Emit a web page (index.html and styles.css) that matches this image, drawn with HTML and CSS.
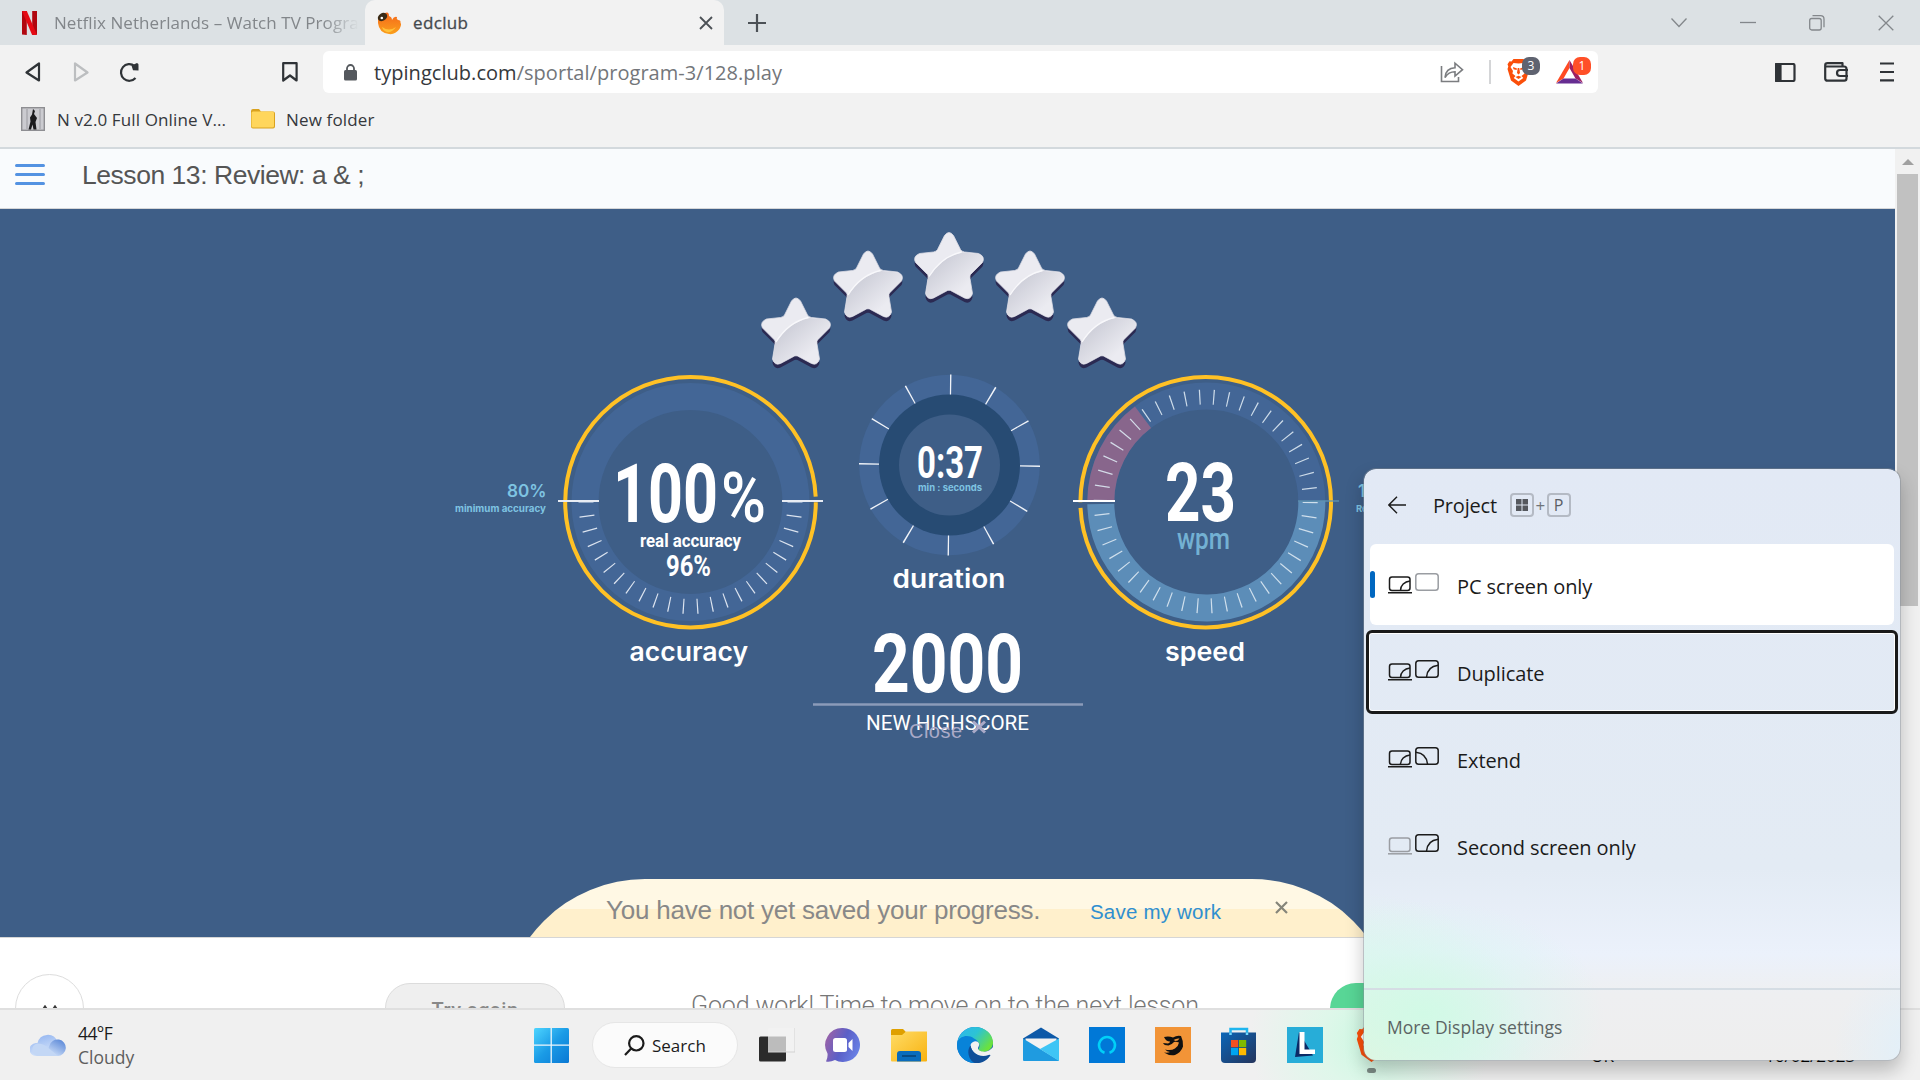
FILE: index.html
```html
<!DOCTYPE html>
<html lang="en">
<head>
<meta charset="utf-8">
<title>edclub</title>
<link rel="stylesheet" href="styles.css">
</head>
<body>
<svg class="defs" width="0" height="0">
  <defs>
    <linearGradient id="starLow" x1="0.2" y1="0.3" x2="0.7" y2="0.75"><stop offset="0" stop-color="#cfd0da"/><stop offset="1" stop-color="#ebebf1"/></linearGradient>
    <linearGradient id="winBlue" x1="0" y1="0" x2="1" y2="1"><stop offset="0" stop-color="#4ed5ff"/><stop offset="0.5" stop-color="#1a9be6"/><stop offset="1" stop-color="#0a78d4"/></linearGradient>
    <linearGradient id="chat" x1="0" y1="0.3" x2="1" y2="0.7"><stop offset="0" stop-color="#9a62a8"/><stop offset="0.5" stop-color="#5b5fc7"/><stop offset="1" stop-color="#6a84e8"/></linearGradient>
    <linearGradient id="folder" x1="0" y1="0" x2="1" y2="1"><stop offset="0" stop-color="#ffdc66"/><stop offset="1" stop-color="#f8b210"/></linearGradient>
    <linearGradient id="edgeTop" x1="0" y1="0" x2="1" y2="0.6"><stop offset="0" stop-color="#2db5f0"/><stop offset="0.5" stop-color="#2cc3d4"/><stop offset="1" stop-color="#6be23c"/></linearGradient>
    <linearGradient id="edgeLow" x1="0" y1="0" x2="1" y2="1"><stop offset="0" stop-color="#1484d8"/><stop offset="1" stop-color="#0b4f9e"/></linearGradient>
    <linearGradient id="cloud" x1="0" y1="0" x2="0.4" y2="1"><stop offset="0" stop-color="#8cb0ef"/><stop offset="1" stop-color="#d5e4fa"/></linearGradient>
    <linearGradient id="cloudDark" x1="1" y1="0" x2="0.3" y2="1"><stop offset="0" stop-color="#4f7fd4"/><stop offset="1" stop-color="#d3e3fa"/></linearGradient>
    <linearGradient id="flame" x1="0" y1="0" x2="0" y2="1"><stop offset="0" stop-color="#f4661b"/><stop offset="1" stop-color="#fba01c"/></linearGradient>
    <linearGradient id="store" x1="0" y1="0" x2="1" y2="1"><stop offset="0" stop-color="#0a66b8"/><stop offset="1" stop-color="#25345c"/></linearGradient>
    <symbol id="star" viewBox="0 0 70 72" overflow="visible">
      <path transform="translate(0 4)" fill="#2b2a52" d="M30 3Q34.500 -3 39 3L46 17Q47 19 50 19.500L64 21Q71 24 68 30L56 42Q55 43 55.500 46L58 61Q56 68 50 65.500L36 58Q34.500 57.500 33 58L19 65.500Q13 68 11 61L13.500 46Q14 43 13 42L1 30Q-2 24 5 21L19 19.500Q22 19 23 17Z"/>
      <path fill="#ebebf1" stroke="#dcdce5" stroke-width=".8" d="M30 3Q34.500 -3 39 3L46 17Q47 19 50 19.500L64 21Q71 24 68 30L56 42Q55 43 55.500 46L58 61Q56 68 50 65.500L36 58Q34.500 57.500 33 58L19 65.500Q13 68 11 61L13.500 46Q14 43 13 42L1 30Q-2 24 5 21L19 19.500Q22 19 23 17Z"/>
      <path fill="url(#starLow)" d="M13.500 46Q27 24 48 20L64 21.500Q70 24 67 30L56 41Q55 43 55 46L57 61Q55 67 50 65L36 57.500Q34.500 57 33 57.500L19 65Q13 67 11.500 61Z"/>
      <path fill="none" stroke="#f8f8fb" stroke-width="1.300" d="M14.500 44Q27 24 47 19.500"/>
    </symbol>
    <symbol id="lion" viewBox="0 0 22 27">
      <path fill="#fb4f0a" d="M6 0h10l2 2.500 2-.2 2 3-.8 2.200.8 2.500-3.500 11.500L11 27l-7.500-5.500L0 10l.8-2.500L0 5.300l2-3 2 .2z"/>
      <path fill="#fff" d="M11 4.500l5-.5 3 4-2.500 4 .6 2.500L14 17l1.800 2-4.800 3.500L6.200 19 8 17l-3.100-2.500.6-2.500L3 8l3-4z"/>
      <path fill="#fb4f0a" d="M5.500 8l4 1.500L9 11l-3-.8zM16.500 8l-4 1.500.5 1.500 3-.8zM10.200 9h1.600l.7 5-1.500 1.400L9.500 14zM8 18l3-1.200L14 18l-3 2z"/>
    </symbol>
    <symbol id="laptop" viewBox="0 0 24 18"><rect x="1.500" y="1" width="20.500" height="13.500" rx="2.500"/><path d="M0 16.800h24"/></symbol>
    <symbol id="laptopOn" viewBox="0 0 24 18"><rect x="1.500" y="1" width="20.500" height="13.500" rx="2.500"/><path d="M0 16.800h24M12.500 14.500c0-5 4-9 9.500-9.500"/></symbol>
    <symbol id="screen" viewBox="0 0 24 18"><rect x=".8" y=".8" width="22.400" height="16.400" rx="2.800"/></symbol>
    <symbol id="screenDup" viewBox="0 0 24 18"><rect x=".8" y=".8" width="22.400" height="16.400" rx="2.800"/><path d="M11.500 17.200C12 10.500 16 6 23.200 5.200"/></symbol>
    <symbol id="screenExt" viewBox="0 0 24 18"><rect x=".8" y=".8" width="22.400" height="16.400" rx="2.800"/><path d="M.8 5.200C8 6 12 10.500 12.500 17.200"/></symbol>
  </defs>
</svg>

<div class="screen">
  <header class="tabs">
    <div class="tab idle">
      <svg width="15" height="24" viewBox="0 0 15 24"><path fill="#b1060f" d="M0 0h4.800v24L0 23.500zM10.200 0H15v23.500l-4.800.5z"/><path fill="#e50914" d="M0 0h4.800L15 24l-5-.3z"/></svg>
      <span class="tab-title fade">Netflix Netherlands – Watch TV Progra</span>
    </div>
    <div class="tab active">
      <svg width="25" height="24" viewBox="0 0 25 24"><path fill="url(#flame)" d="M12 5Q15 6 15 9Q17 5 20 6Q19 8 21 9Q24 9 23.500 12Q25 13 22.500 18Q18 24 12 23Q2 22 1 12Q0 3 8 2Q12 0 12 5Z"/><ellipse cx="5.500" cy="6" rx="5" ry="3.800" fill="#3a2a16" transform="rotate(-35 5.500 6)"/><circle cx="4.800" cy="7" r="1.300" fill="#fff"/><path fill="#ffc23b" d="M5 16q7 5 14 0q-4 6-9 5q-4-1-5-5z"/></svg>
      <span class="tab-title strong">edclub</span>
      <svg class="tab-x" width="14" height="14" viewBox="0 0 14 14"><path d="M1 1l12 12M13 1L1 13" stroke="#4c5156" stroke-width="1.800"/></svg>
    </div>
    <svg class="tab-plus" width="18" height="18" viewBox="0 0 18 18"><path d="M9 0v18M0 9h18" stroke="#4c5156" stroke-width="2.200"/></svg>
    <div class="win-controls">
      <svg width="16" height="16" viewBox="0 0 16 16"><path d="M.5 3.500l7.500 8 7.500-8"/></svg>
      <svg width="16" height="16" viewBox="0 0 16 16"><path d="M0 7.500h16"/></svg>
      <svg width="16" height="16" viewBox="0 0 16 16"><rect x=".7" y="3.500" width="11.500" height="11.500" rx="2"/><path d="M3.500.7h8q3.500 0 3.500 3.500v8"/></svg>
      <svg width="16" height="16" viewBox="0 0 16 16"><path d="M.7.7l14.600 14.600M15.300.7L.7 15.300"/></svg>
    </div>
  </header>

  <div class="toolbar">
    <svg class="t-back" width="16" height="21" viewBox="0 0 16 21"><path d="M14 1.500v17L1.500 10.500z"/></svg>
    <svg class="t-fwd" width="16" height="21" viewBox="0 0 16 21"><path d="M2 1.500v17L14.500 10.500z"/></svg>
    <svg class="t-reload" width="21" height="21" viewBox="0 0 21 21"><path d="M16.500 16A8.300 8.300 0 1 1 15.500 4"/><path fill="#2f3337" stroke="none" d="M12.500 3.500L18 1q2 .5 1.500 3v4.500l-5.500-.3z"/></svg>
    <svg class="t-mark" width="16" height="20" viewBox="0 0 16 20"><path d="M1.200 1.200h13.400v17.300L8 13.500l-6.800 5z"/></svg>
    <div class="omnibox">
      <svg class="lock" width="13" height="17" viewBox="0 0 13 17"><rect y="6" width="13" height="10.500" rx="1.500" fill="#54585d"/><path d="M3 7V4.500a3.500 3.500 0 0 1 7 0V7" fill="none" stroke="#54585d" stroke-width="1.800"/></svg>
      <span class="url"><b>typingclub.com</b>/sportal/program-3/128.play</span>
      <svg class="share" width="24" height="22" viewBox="0 0 24 22"><path d="M1.500 5v15.500h17V16" /><path d="M5 16.500c.5-6 4-9.500 10-9.700V2.200l7.500 6.500L15 15v-4.200c-4.500 0-7.500 1.500-10 5.700z"/></svg>
      <i class="sep"></i>
      <span class="ext"><svg width="23" height="27"><use href="#lion"/></svg><em class="badge gray">3</em></span>
      <span class="ext"><svg width="27" height="24" viewBox="0 0 27 24"><path fill="#ff4a22" d="M13.500 0L0 23l7.500-4.500 6-10.500z"/><path fill="#9e1f63" d="M13.500 0L27 23l-7.500-4.500-6-10.500z"/><path fill="#662d91" d="M0 23.500h27l-7.500-5h-12z"/></svg><em class="badge orange">1</em></span>
    </div>
    <svg class="t-side" width="21" height="19" viewBox="0 0 21 19"><rect x="1" y="1" width="18.500" height="17" rx="1.500"/><path fill="#2f3337" d="M1 1h4.500v17H1z"/></svg>
    <svg class="t-wallet" width="25" height="20" viewBox="0 0 25 20"><path d="M2 4.500h18q2.500 0 2.500 2.500v9.500q0 2.200-2.200 2.200H3.500q-2.300 0-2.300-2.200V3.200Q1.200 1.200 3.500 1.200h15v3"/><path d="M24 8h-8q-3 0-3 3t3 3h8"/></svg>
    <svg class="t-menu" width="14" height="20" viewBox="0 0 14 20"><path d="M0 1.500h14M0 10h14M0 18.300h14"/></svg>
  </div>

  <div class="bookmarks">
    <svg width="24" height="24" viewBox="0 0 24 24"><rect x=".7" y=".7" width="22.600" height="22.600" fill="#cbcbd0" stroke="#8e8e92" stroke-width="1.400"/><path fill="#1b1b1d" d="M12 2l2 2-1 3 3 4-1.500 4 1 7.500h-3l-1-5-1.500 5H7.500l2-8-.5-4 2-3z"/><path d="M6 2v20M19 2v20" stroke="#9a9aa0"/></svg>
    <span class="bm one">N v2.0 Full Online V...</span>
    <svg width="24" height="20" viewBox="0 0 24 20"><path fill="#d9a21f" d="M0 2Q0 0 2 0h6l2 2.500h12q2 0 2 2v13q0 2-2 2H2q-2 0-2-2z"/><rect x=".5" y="2.500" width="22.500" height="16" rx="1.500" fill="#ffd65c"/></svg>
    <span class="bm two">New folder</span>
  </div>

  <main class="view">
    <div class="page">
      <div class="lesson">
        <svg width="30" height="22" viewBox="0 0 30 22"><path d="M1.500 1.500h27M1.500 10.500h27M1.500 19.500h27" stroke="#5392e2" stroke-width="3" stroke-linecap="round"/></svg>
        <h1>Lesson 13: Review: a &amp; ;</h1>
      </div>

      <section class="stage">
        <svg class="stars" width="400" height="163" viewBox="749 209 400 163">
          <use href="#star" x="761.500" y="298" width="70" height="72"/>
          <use href="#star" x="833.500" y="251" width="70" height="72"/>
          <use href="#star" x="914.500" y="232.500" width="70" height="72"/>
          <use href="#star" x="995.500" y="251" width="70" height="72"/>
          <use href="#star" x="1067.500" y="298" width="70" height="72"/>
        </svg>
        <div class="gauges">
          <svg width="370" height="388" viewBox="440 372 370 388">
            <circle cx="690.500" cy="502" r="105.500" fill="none" stroke="#436696" stroke-width="27"/>
            <path d="M795 502A104.500 104.500 0 0 1 586 502" fill="none" stroke="#dbe3ef" stroke-width="15" pathLength="23" stroke-dasharray=".085 .915" stroke-dashoffset=".042"/>
            <circle cx="690.500" cy="502.200" r="125.300" fill="none" stroke="#ffc125" stroke-width="4" pathLength="360" stroke-dasharray="357.400 2.600"/>
            <path d="M558 501h41M782 501h41" stroke="#e8ecf3" stroke-width="2"/>
            <g class="num">
              <text x="613" y="522" font-size="82" textLength="105" lengthAdjust="spacingAndGlyphs">100</text>
              <text x="721" y="522" font-size="70" textLength="45" lengthAdjust="spacingAndGlyphs" font-weight="500">%</text>
              <text x="640" y="547" font-size="18.500" textLength="101" lengthAdjust="spacingAndGlyphs">real accuracy</text>
              <text x="666" y="575.500" font-size="29" textLength="45" lengthAdjust="spacingAndGlyphs">96%</text>
            </g>
            <g class="lab soft">
              <text x="507" y="497" font-size="17" textLength="39.500" lengthAdjust="spacingAndGlyphs">80%</text>
              <text class="tiny" x="455" y="512" font-size="9.500" textLength="91" lengthAdjust="spacingAndGlyphs">minimum accuracy</text>
            </g>
            <text class="lab" x="629.500" y="661" font-size="26" textLength="118.500" lengthAdjust="spacingAndGlyphs">accuracy</text>
          </svg>
          <svg width="260" height="388" viewBox="810 372 260 388">
            <circle cx="949.500" cy="465" r="90.300" fill="#436696"/>
            <circle cx="949.500" cy="465" r="70.500" fill="#274b73"/>
            <circle cx="949.500" cy="465" r="50.500" fill="#3e5e87"/>
            <circle cx="949.500" cy="465" r="80.500" fill="none" stroke="#f0f3f8" stroke-width="20" pathLength="12" stroke-dasharray=".032 .968" stroke-dashoffset=".016" transform="rotate(.8 949.500 465)"/>
            <text class="num" x="917" y="478" font-size="44.500" textLength="66" lengthAdjust="spacingAndGlyphs">0:37</text>
            <text class="lab soft tiny" x="918" y="491" font-size="9.500" textLength="64" lengthAdjust="spacingAndGlyphs">min : seconds</text>
            <text class="lab" x="892.500" y="588" font-size="26" textLength="113" lengthAdjust="spacingAndGlyphs">duration</text>
            <text class="num" x="872" y="692" font-size="82" textLength="151" lengthAdjust="spacingAndGlyphs">2000</text>
            <path d="M813 704.500h270" stroke="#8b9bb9" stroke-width="2.500"/>
            <text class="high" x="866" y="730" font-size="21" textLength="163" lengthAdjust="spacingAndGlyphs">NEW HIGHSCORE</text>
            <text class="close" x="909" y="738" font-size="20" textLength="53">Close</text>
            <path d="M973 721.500l12 11M985 721.500l-12 11" stroke="#aaaac8" stroke-width="3"/>
          </svg>
          <svg width="294" height="388" viewBox="1070 372 294 388">
            <path d="M1100.800 501.500A105.500 105.500 0 0 1 1311.800 501.500" fill="none" stroke="#436696" stroke-width="27"/>
            <path d="M1311.800 501A105.500 105.500 0 0 1 1100.800 504" fill="none" stroke="#5c8db8" stroke-width="27"/>
            <path d="M1100.800 501.500A105.500 105.500 0 0 1 1143 417.300" fill="none" stroke="#88668c" stroke-width="27"/>
            <circle cx="1205.700" cy="501.500" r="104.500" fill="none" stroke="#dbe8f2" stroke-opacity=".9" stroke-width="15" pathLength="46" stroke-dasharray=".085 .915" stroke-dashoffset=".042" transform="rotate(.6 1205.700 501.500)"/>
            <circle cx="1205.700" cy="502.200" r="125.300" fill="none" stroke="#ffc125" stroke-width="4" pathLength="360" stroke-dasharray="357.400 2.600" transform="rotate(180 1205.700 502.200)"/>
            <path d="M1073 501h42" stroke="#fff" stroke-width="2"/>
            <path d="M1298 501h41" stroke="#5f93b0" stroke-opacity=".65" stroke-width="2"/>
            <text class="num" x="1165" y="520.500" font-size="82" textLength="71" lengthAdjust="spacingAndGlyphs">23</text>
            <text class="num wpm" x="1177" y="549" font-size="29.500" textLength="53" lengthAdjust="spacingAndGlyphs">wpm</text>
            <text class="lab" x="1165" y="661" font-size="26" textLength="80" lengthAdjust="spacingAndGlyphs">speed</text>
            <text class="lab soft" x="1358" y="497" font-size="17">1</text>
            <text class="lab soft tiny" x="1356" y="512" font-size="9.500">Re</text>
          </svg>
        </div>
        <div class="banner">
          <span class="msg">You have not yet saved your progress.</span>
          <a class="save">Save my work</a>
          <svg width="13" height="13" viewBox="0 0 13 13"><path d="M1 1l11 11M12 1L1 12" stroke="#85857a" stroke-width="2.200"/></svg>
        </div>
      </section>

      <section class="next">
        <div class="round"><svg width="16" height="9" viewBox="0 0 16 9"><path d="M1 5l2-3 2 3M11 5l2-3 2 3" fill="none" stroke="#3a3a3a" stroke-width="2.600"/></svg></div>
        <div class="retry">Try again</div>
        <p class="praise">Good work! Time to move on to the next lesson</p>
        <div class="go"></div>
      </section>
    </div>
    <div class="scroll">
      <svg width="12" height="6" viewBox="0 0 12 6"><path d="M6 0l6 6H0z" fill="#a0a0a0"/></svg>
      <i></i>
    </div>
  </main>

  <footer class="taskbar">
    <div class="weather">
      <svg width="36" height="24" viewBox="0 0 36 24"><path fill="url(#cloud)" d="M7 23a7 6.500 0 0 1-1-13h1.500a10.500 10.500 0 0 1 20-1.500L29 23z"/><path fill="url(#cloudDark)" d="M15 23h12.500a8.300 8.300 0 1 0-8-10.500z"/><path fill="#c3d7f5" d="M7 23a6.500 6.500 0 0 1 0-12.500q7 0 12 5l9 7.500z"/></svg>
      <div><b>44°F</b><span>Cloudy</span></div>
    </div>
    <svg class="start" width="35" height="35" viewBox="0 0 35 35"><rect width="35" height="35" rx="1.500" fill="url(#winBlue)"/><path d="M17.200 0v35M0 17.200h35" stroke="#eef6fb" stroke-width="1.300"/></svg>
    <div class="search"><svg width="21" height="21" viewBox="0 0 21 21"><circle cx="12.300" cy="8.300" r="7.200"/><path d="M7.200 13.500L1 20"/></svg><span>Search</span></div>
    <div class="apps">
      <svg width="36" height="36" viewBox="0 0 36 36"><rect y="9.500" width="27" height="25" rx="1.500" fill="#2b2b2b"/><rect x="9" y="1" width="27" height="24" rx="1" fill="#f2f2f2"/><rect x="9" y="9.500" width="18" height="15.500" fill="#bcbcbc"/><path d="M9 25h27V1" fill="none" stroke="#d2d2d2"/></svg>
      <svg width="36" height="36" viewBox="0 0 36 36"><path fill="url(#chat)" d="M18 1a17 17 0 1 1-8 32q-5 2.500-9 1.500 2-4 1.500-8A17 17 0 0 1 18 1z"/><rect x="8" y="11" width="14" height="14" rx="2.500" fill="#fff"/><path fill="#fff" d="M23.500 16l4-4v12l-4-4z"/></svg>
      <svg width="36" height="36" viewBox="0 0 36 36"><path fill="#dfa000" d="M0 3.500Q0 2 1.500 2H12l3 3h20q1 0 1 1v6H0z"/><path fill="url(#folder)" d="M0 8h11l4-3.500h21V33.500q0 1-1 1H1q-1 0-1-1z"/><path fill="#0a6cbc" d="M6 34.500V27q0-3 3-3h18q3 0 3 3v7.500z"/><path d="M11 29h14" stroke="#07487f" stroke-width="1.800"/></svg>
      <svg width="36" height="36" viewBox="0 0 36 36"><circle cx="18" cy="18" r="18" fill="url(#edgeLow)"/><path fill="url(#edgeTop)" d="M.3 16C2 6 9 0 18 0c10 0 18 7 18 15.500C36 21 31.500 25 26 25c-3.500 0-5.500-1.300-4.500-3 2-2.500 1.500-8.500-5-8.500Q11 8.500 5 10.500Q2 12 .3 16z"/><path fill="#0883d9" d="M.3 15C3 9 11 7 17 11.500q4 2 4 4c-6-1-11 5-9.500 12q1 5 6 8.500C8 36 0 28 0 18z"/><path fill="#f0f1f1" d="M13.500 18c1.500-4 7-5 8.500-1.500.7 2-1 3.500-1 4.800 0 2 3 3.700 7 3.400q4-.3 8-4.500v4.500l-2.200 3.200c-9 4-19 0-20.300-9.900z"/><path fill="#0f4e98" d="M13.500 18.500c1 8 10 12.500 18 9.500q1.800-.8 2 .3C30 34 24 37 17 35.800 11 32 10 23 13.500 18.500z"/></svg>
      <svg width="36" height="36" viewBox="0 0 36 36"><path fill="#0d59a8" d="M0 11.500L18 .5l18 11V15H0z"/><path fill="#f2f2f2" d="M2.500 11.500h31v6L18 26 2.500 17z"/><path fill="#1f9be0" d="M0 11.500L36 33.500q0 .5-.5.500H1q-1 0-1-1z"/><path fill="#3fc5f5" d="M36 11.500L17 22l19 12z"/></svg>
      <svg width="36" height="36" viewBox="0 0 36 36"><rect width="36" height="36" fill="#0078d7"/><path d="M15.500 25.700a8 8 0 1 1 5 0" fill="none" stroke="#00d0f8" stroke-width="2.500"/></svg>
      <svg width="36" height="36" viewBox="0 0 36 36"><rect width="36" height="36" fill="#f29437"/><path fill="#111" d="M9 10q5-1 9 .5 4-2.500 8-1.500 2.500 5 2 10.500-2 6-8 8.500-6 1-11-2.500 4 .5 6-.5-3-.5-5-2.500 6 1.500 10-1 3.500-2.500 4-6-3-1-5-.5-2.500 3-5.500 3.500Q9 18.500 8 16l5 .5q2-.5 2-2-4 0-6-4.500z"/><path fill="#f29437" d="M18.500 13q3-2 6-1.500-1.500 2.500-4 2.500z"/></svg>
      <svg width="36" height="36" viewBox="0 0 36 36"><path d="M9.500 8V2h16.500v6" fill="none" stroke="#1fb5ee" stroke-width="2.500"/><path fill="url(#store)" d="M0 5.500h35V32q0 4-4 4H4q-4 0-4-4z"/><path d="M9.500 5.500V8M26 5.500V8" stroke="#6fd8ff" stroke-width="2.500"/><path fill="#f25022" d="M10 13h7.200v7.200H10z"/><path fill="#7fba00" d="M18 13h7.200v7.200H18z"/><path fill="#00a4ef" d="M10 21h7.200v7.200H10z"/><path fill="#ffb900" d="M18 21h7.200v7.200H18z"/></svg>
      <svg width="36" height="36" viewBox="0 0 36 36"><rect width="36" height="36" fill="#27add8"/><path fill="#0b2a66" d="M12 5L8 30l18-1.500z"/><path fill="#fff" d="M12.500 5h5v17.500H28V27H12.500z"/></svg>
      <span class="brave"><svg width="31" height="36"><use href="#lion"/></svg><i></i></span>
    </div>
    <span class="lang">UK</span>
    <span class="date">16/02/2023</span>
  </footer>

  <aside class="project">
    <div class="p-head">
      <svg width="18" height="18" viewBox="0 0 18 18"><path d="M18 9H1M9 .8L.8 9 9 17.200" fill="none" stroke="#1b1b1b" stroke-width="1.400"/></svg>
      <span class="p-title">Project</span>
      <kbd><svg width="12" height="12" viewBox="0 0 12 12"><path fill="#55585e" d="M0 0h5.500v5.500H0zM6.500 0H12v5.500H6.500zM0 6.500h5.500V12H0zM6.500 6.500H12V12H6.500z"/></svg></kbd><span class="plus">+</span><kbd>P</kbd>
    </div>
    <div class="p-row current"><svg width="24" height="18"><use href="#laptopOn"/></svg><svg class="up off" width="24" height="18"><use href="#screen"/></svg><span>PC screen only</span></div>
    <div class="p-row focus"><svg width="24" height="18"><use href="#laptopOn"/></svg><svg class="up" width="24" height="18"><use href="#screenDup"/></svg><span>Duplicate</span></div>
    <div class="p-row"><svg width="24" height="18"><use href="#laptopOn"/></svg><svg class="up" width="24" height="18"><use href="#screenExt"/></svg><span>Extend</span></div>
    <div class="p-row"><svg class="off" width="24" height="18"><use href="#laptop"/></svg><svg class="up" width="24" height="18"><use href="#screenDup"/></svg><span>Second screen only</span></div>
    <div class="p-foot">More Display settings</div>
  </aside>
</div>
</body>
</html>
```
FILE: styles.css
```css
* { box-sizing: border-box; }
body { margin: 0; font-family: "Open Sans", "Noto Sans", sans-serif; }
svg { display: block; flex: none; }
.defs { position: absolute; }
.screen { position: relative; width: 1920px; height: 1080px; overflow: hidden; display: flex; flex-direction: column; background: #f2f2f2; }

.tabs { height: 45px; flex: none; display: flex; align-items: center; background: #dce1e4; }
.tab { height: 45px; display: flex; align-items: center; white-space: nowrap; }
.tab.idle { width: 365px; padding-left: 22px; gap: 17px; }
.tab.active { width: 359px; padding: 0 11px 0 12px; gap: 11px; background: #f2f2f2; border-radius: 10px 10px 0 0; }
.tab-title { font-size: 17px; line-height: 24px; color: #82868a; }
.tab-title.fade { width: 305px; overflow: hidden; letter-spacing: .06px; -webkit-mask-image: linear-gradient(90deg, #000 88%, transparent); mask-image: linear-gradient(90deg, #000 88%, transparent); }
.tab-title.strong { color: #44494e; letter-spacing: .35px; -webkit-text-stroke: .3px #44494e; }
.tab-x { margin-left: auto; }
.tab-plus { margin-left: 24px; }
.win-controls { margin-left: auto; display: flex; gap: 53px; padding-right: 26px; }
.win-controls svg { fill: none; stroke: #83878b; stroke-width: 1.3; }

.toolbar { height: 54px; flex: none; display: flex; align-items: center; }
.toolbar > svg { fill: none; stroke: #2f3337; stroke-width: 2.2; stroke-linejoin: round; }
.t-back { margin-left: 25px; }
.toolbar > .t-fwd { margin-left: 32px; stroke: #bcbec0; }
.t-reload { margin-left: 30px; }
.t-mark { margin-left: 142px; }
.omnibox { margin-left: 25px; width: 1275px; height: 42px; display: flex; align-items: center; background: #fff; border-radius: 6px; padding-left: 21px; }
.url { flex: none; margin-left: 17px; width: 1066px; padding-top: 2px; font-size: 20px; letter-spacing: .04px; line-height: 28px; color: #73767a; white-space: nowrap; }
.url b { font-weight: 400; color: #35383c; }
.share { fill: none; stroke: #7b7d80; stroke-width: 1.6; }
.sep { flex: none; width: 2px; height: 24px; margin-left: 25px; margin-right: 16px; background: #d4d5d7; }
.ext { flex: none; position: relative; width: 49px; }
.badge { position: absolute; left: 15px; top: -2px; width: 18px; height: 18px; border-radius: 7px; color: #fff; font: normal 12px/18px "Open Sans", sans-serif; text-align: center; }
.ext + .ext { width: 37px; }
.ext + .ext .badge { left: 17px; top: -3px; }
.badge.gray { background: #5f6370; }
.badge.orange { background: #ff5028; }
.t-side { margin-left: 177px; }
.t-wallet { margin-left: 28px; }
.t-menu { margin-left: 31px; }

.bookmarks { height: 50px; flex: none; display: flex; align-items: center; padding: 0 0 8px 21px; border-bottom: 2px solid #d3d9dd; white-space: nowrap; font-size: 17px; color: #35383c; }
.bm.one { margin-left: 12px; width: 194px; letter-spacing: .12px; }
.bm.two { margin-left: 11px; letter-spacing: .15px; }

.view { height: 859px; flex: none; display: flex; }
.page { width: 1895px; overflow: hidden; background: #fff; }
.lesson { height: 60px; display: flex; align-items: center; gap: 37px; padding: 0 0 8px 15px; background: #f9fbfd; box-shadow: inset 0 -1px #d5d6d8; }
.lesson h1 { margin: 0; font: 400 26.5px/32px "Liberation Sans", Arial, sans-serif; letter-spacing: -.46px; color: #555; }
.stage { height: 728px; background: #3e5e87; overflow: hidden; }
.stars { margin-left: 749px; }
.gauges { display: flex; padding-left: 440px; }
.gauges svg { overflow: visible; }
.num { fill: #fff; font-family: Roboto, sans-serif; font-weight: 700; }
.num.wpm { fill: #73b1d3; font-weight: 500; }
.lab { fill: #fff; font-family: Inter, sans-serif; font-weight: 600; }
.lab.soft, .lab.soft text { fill: #7ec4e2; }
.tiny { font-weight: 700; }
.high { fill: #fff; font-family: Roboto, sans-serif; }
.close { fill: #aaaac8; font-family: "Liberation Sans", sans-serif; }
.banner { width: 893px; height: 300px; margin: 119px 0 0 502px; padding: 0 107px 0 104px; border-radius: 143px; background: linear-gradient(#fff8e4 30px, #fff0cc 30px); display: flex; align-items: flex-start; white-space: nowrap; font-family: "Liberation Sans", Arial, sans-serif; color: #888; }
.msg { width: 484px; font-size: 26px; letter-spacing: -.23px; line-height: 62px; }
.save { font-size: 20.5px; letter-spacing: .2px; line-height: 65px; color: #2f8fd0; }
.banner svg { margin: 22px 0 0 auto; }
.next { display: flex; height: 71px; border-top: 1px solid #d6d6d6; overflow: hidden; }
.round { width: 69px; height: 69px; margin: 36px 0 0 15px; border: 1px solid #ddd; border-radius: 50%; display: flex; justify-content: center; padding-top: 30px; }
.retry { width: 180px; height: 60px; margin: 45px 0 0 301px; border: 1px solid #dcdcdc; border-radius: 25px; background: #efefef; padding-top: 12px; text-align: center; font: 500 20px/28px Roboto, sans-serif; letter-spacing: .5px; color: #888; }
.praise { margin: 53px 0 0 126px; width: 639px; white-space: nowrap; font: 300 25px/30px Roboto, sans-serif; letter-spacing: -.13px; color: #777; }
.go { width: 180px; height: 60px; margin-top: 45px; border-radius: 26px; background: #58d696; }
.scroll { width: 25px; background: #f1f1f1; padding: 10px 2px 0; }
.scroll svg { margin: 0 auto; }
.scroll i { display: block; height: 432px; margin-top: 9px; background: #c1c1c1; }

.taskbar { height: 72px; flex: none; display: flex; align-items: center; border-top: 2px solid #dfdfdf; background: radial-gradient(circle at 1370px 30px, #cdf8e2 0, #dff7ea 50px, rgba(240,240,240,0) 120px), #f0f0f0; }
.weather { width: 534px; display: flex; align-items: center; gap: 12px; padding-left: 30px; }
.weather div { display: flex; flex-direction: column; font-size: 17.5px; line-height: 24px; }
.weather b { font-weight: 400; color: #1b1b1b; letter-spacing: -.6px; }
.weather span { color: #5e5e5e; }
.search { width: 146px; height: 46px; margin-left: 23px; border: 1px solid #e6e6e6; border-radius: 23px; background: #fbfbfb; display: flex; align-items: center; gap: 7px; padding-left: 31px; font-size: 17px; color: #1b1b1b; }
.search svg { fill: none; stroke: #1b1b1b; stroke-width: 2.2; }
.apps { display: flex; gap: 30px; margin-left: 21px; }
.brave { position: relative; width: 29px; margin-left: 3px; }
.brave svg { margin-top: -1px; }
.brave i { position: absolute; left: 11px; top: 41px; width: 9px; height: 5px; border-radius: 3px; background: #7b8a84; }
.lang { margin-left: 206px; width: 174px; font-size: 17px; line-height: 20px; padding-top: 22px; }
.date { font-size: 17px; line-height: 20px; letter-spacing: 0; padding-top: 22px; }

.project { position: absolute; left: 1363px; top: 468px; width: 538px; height: 593px; border: 1px solid rgba(120,128,138,.5); border-radius: 13px; padding: 0 1px; display: flex; flex-direction: column; color: #1b1b1b; box-shadow: 0 10px 18px rgba(0,0,0,.22); background:
  radial-gradient(ellipse 180px 115px at 60px 545px, rgba(208,250,230,.9), rgba(214,247,240,.5) 55%, rgba(230,240,245,0)),
  radial-gradient(circle at 0 593px, #e6f6d4 0, rgba(214,250,226,.6) 90px, rgba(226,244,245,0) 170px),
  radial-gradient(circle at 560px 580px, #e0f0fb, rgba(230,240,250,0) 90px),
  linear-gradient(#e2e9f5 0, #e3ebf4 400px, #ebf1fb 485px, #eeeff1 525px, #eeeeee 590px); background-clip: padding-box; }
.p-head { height: 75px; flex: none; display: flex; align-items: center; padding: 0 0 3px 23px; }
.p-title { margin-left: 27px; width: 77px; font-size: 20px; letter-spacing: -.2px; }
kbd { width: 24px; height: 24px; border: 2px solid #b4bac4; border-radius: 4px; display: flex; align-items: center; justify-content: center; font: 400 16px/20px "Open Sans", sans-serif; color: #5c5f66; }
.plus { width: 12.5px; text-align: center; font-size: 17px; color: #70747a; }
.p-row { height: 81px; flex: none; margin: 0 5px 6px; padding-left: 18px; display: flex; align-items: center; gap: 3px; font-size: 20px; position: relative; }
.p-row span { margin: 3px 0 0 15px; letter-spacing: -.08px; }
.p-row svg { fill: none; stroke: #1b1b1b; stroke-width: 1.5; }
.p-row svg.up { margin-top: -6px; }
.p-row svg.off { stroke: #9a9da2; }
.current { background: #fff; border-radius: 6px; }
.current::before { content: ""; position: absolute; left: 0; top: 27px; width: 5px; height: 27px; border-radius: 3px; background: #0067c0; }
.focus::before { content: ""; position: absolute; inset: -1px -4px -2px; border: 3px solid #1a1a1a; border-radius: 6px; box-shadow: inset 0 0 0 1px #fff; }
.p-foot { flex: 1; margin: 96px -1px 0; padding: 4px 0 0 23px; display: flex; align-items: center; border-top: 2px solid #d5dde4; font-size: 17.5px; letter-spacing: .02px; color: #5c6464; }
```
